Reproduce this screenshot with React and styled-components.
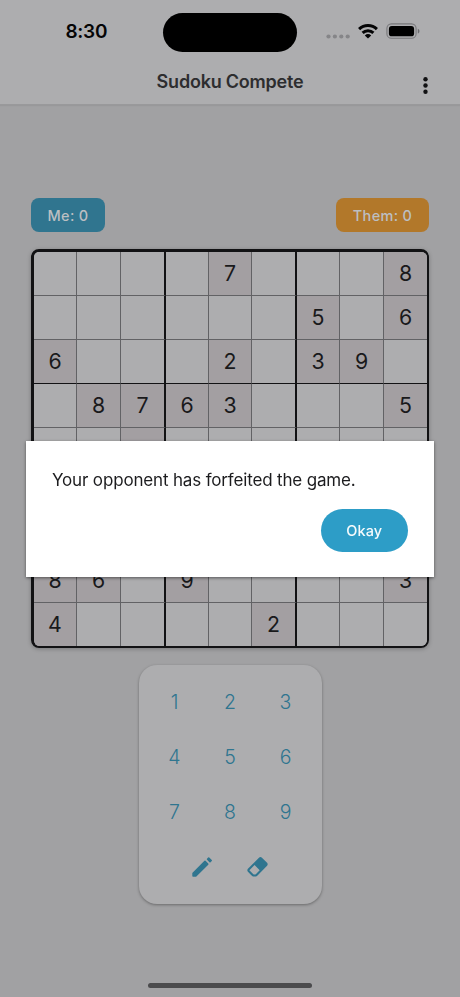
import React from "react";
import styled, { createGlobalStyle } from "styled-components";

const GlobalStyle = createGlobalStyle`
  * { box-sizing: border-box; }
  body {
    margin: 0;
    background: #a1a1a3;
    font-family: Inter, "Liberation Sans", sans-serif;
    color: #19191b;
  }
  button { font: inherit; border: 0; padding: 0; background: none; }
`;

const Screen = styled.div`
  width: 460px;
  height: 997px;
  overflow: hidden;
  display: flex;
  flex-direction: column;
  background: #a1a1a3;
`;

const Header = styled.header`
  height: 105px;
  flex: none;
  background: #adadaf;
  border-bottom: 1px solid #99999b;
  box-shadow: 0 1px 1px rgba(0, 0, 0, 0.05);
`;

const StatusBar = styled.div`
  height: 63px;
  display: grid;
  grid-template-columns: 163px 134px 163px;
`;

const Clock = styled.time`
  padding: 19px 0 0 65.5px;
  font-size: 19px;
  line-height: 26px;
  font-weight: 600;
  letter-spacing: -0.3px;
  color: #050506;
`;

const Island = styled.div`
  height: 39px;
  margin-top: 12.5px;
  border-radius: 20px;
  background: #000;
`;

const StatusIcons = styled.div`
  display: flex;
  padding: 20px 0 0 29px;
`;

const TitleBar = styled.div`
  display: grid;
  grid-template-columns: 60px 1fr 60px;
  height: 41px;
`;

const Title = styled.h1`
  grid-column: 2;
  margin: 6px 0 0;
  font-size: 18px;
  line-height: 26px;
  font-weight: 600;
  letter-spacing: -0.22px;
  text-align: center;
  color: #2d2d2f;
`;

const MenuButton = styled.button`
  display: flex;
  padding: 13px 0 0 22px;
`;

const Scores = styled.div`
  display: flex;
  justify-content: space-between;
  padding: 93px 31px 0;
`;

const Score = styled.div`
  width: ${({ $w }) => $w}px;
  height: 34px;
  border-radius: 8px;
  background: ${({ $bg }) => $bg};
  color: #bcbfc2;
  font-size: 14.5px;
  line-height: 35px;
  font-weight: 450;
  letter-spacing: 0.3px;
  text-align: center;
`;

const Board = styled.div`
  width: 398px;
  flex: none;
  margin: 17px 0 0 31px;
  border: solid #121214;
  border-width: 3px 2px 2px 3px;
  border-radius: 8px;
  overflow: hidden;
  display: grid;
  grid-template-columns: 43px 44px 45px 43px 43px 45px 43px 44px 43px;
  grid-template-rows: 44px 44px 44px 44px 44px 43px 44px 44px 43px;
  box-shadow: 0 1px 4px rgba(0, 0, 0, 0.25);
`;

const Cell = styled.div`
  display: flex;
  align-items: center;
  justify-content: center;
  padding-bottom: 1px;
  font-size: 21.3px;
  line-height: 26px;
  background: ${({ $given }) => ($given ? "#a39fa2" : "#adadaf")};
  border-right: ${({ $right }) => ["0", "1px solid #626265", "2px solid #121214"][$right]};
  border-bottom: ${({ $bottom }) => ["0", "1px solid #626265", "1px solid #121214"][$bottom]};
`;

const Pad = styled.div`
  width: 183px;
  height: 239px;
  flex: none;
  margin: 17px 0 0 138.5px;
  padding: 9px 8px;
  border-radius: 18px;
  background: #adadaf;
  box-shadow: 0 1px 3px rgba(0, 0, 0, 0.35);
`;

const PadRow = styled.div`
  display: flex;
  justify-content: center;
`;

const Key = styled.button`
  width: 55.5px;
  height: 55.3px;
  display: flex;
  align-items: center;
  justify-content: center;
  font-size: 19.5px;
  line-height: 24px;
  font-weight: 350;
  color: #2f758f;
`;

const IconKey = styled(Key)`
  padding-bottom: 2px;
`;

const HomeIndicator = styled.div`
  width: 164px;
  height: 5px;
  margin: auto auto 9px;
  border-radius: 3px;
  background: #4b4b4d;
`;

const DialogLayer = styled.div`
  position: fixed;
  top: 441px;
  left: 26px;
`;

const Dialog = styled.div`
  width: 408px;
  height: 136px;
  padding: 25px 26px;
  display: flex;
  flex-direction: column;
  background: #fff;
  box-shadow: 0 1px 3px rgba(0, 0, 0, 0.5);
`;

const Message = styled.p`
  margin: 0;
  font-size: 17px;
  line-height: 28px;
  letter-spacing: -0.16px;
  white-space: nowrap;
  color: #1c1c1e;
`;

const OkayButton = styled.button`
  align-self: flex-end;
  width: 87.5px;
  height: 43px;
  margin-top: 15px;
  border-radius: 22px;
  background: #2d9dc7;
  color: #f4fafc;
  font-size: 14.5px;
  font-weight: 500;
  letter-spacing: 0.1px;
`;

const GIVENS = [
  "....7...8",
  "......5.6",
  "6...2.39.",
  ".8763...5",
  "..4......",
  ".........",
  ".........",
  "86.9....3",
  "4....2...",
];

const edge = (i) => (i === 8 ? 0 : i % 3 === 2 ? 2 : 1);

const StatusGlyphs = () => (
  <svg width="110" height="24" viewBox="326 20 110 24">
    <g fill="#858588">
      <circle cx="328.5" cy="36.5" r="2.1" />
      <circle cx="334.9" cy="36.5" r="2.1" />
      <circle cx="341.3" cy="36.5" r="2.1" />
      <circle cx="347.7" cy="36.5" r="2.1" />
    </g>
    <g fill="none" stroke="#050506" strokeWidth="3">
      <path d="M359.1 29.1a12.7 12.7 0 0 1 17.8 0" />
      <path d="M362.6 32.9a7.7 7.7 0 0 1 10.8 0" />
    </g>
    <path d="M364.8 35.5a4.7 4.7 0 0 1 6.4 0L368 38.6z" fill="#050506" />
    <rect x="386.9" y="23.9" width="29.2" height="14.4" rx="4.6" fill="none" stroke="#77777a" strokeWidth="1.1" />
    <rect x="388.9" y="25.9" width="25.2" height="10.4" rx="2.9" fill="#000" />
    <path d="M417.8 28.7c2.2.8 2.2 4 0 4.8z" fill="#6b6b6e" />
  </svg>
);

const MoreIcon = () => (
  <svg width="8" height="20" viewBox="0 0 8 20" fill="#111113">
    <circle cx="3.5" cy="3.2" r="2.2" />
    <circle cx="3.5" cy="9.5" r="2.2" />
    <circle cx="3.5" cy="15.8" r="2.2" />
  </svg>
);

const PencilIcon = () => (
  <svg width="24" height="24" viewBox="0 0 24 24" fill="#2f758f" stroke="#2f758f" strokeWidth="1.6" strokeLinejoin="round">
    <path d="M3.1 18.3L15 6.4l2.7 2.7L5.8 21H3.1z" />
    <path d="M17.6 4.2l1.1-1.2 2.5 2.5-1.2 1.2z" />
  </svg>
);

const EraserIcon = () => (
  <svg width="25" height="25" viewBox="0 0 24 24" fill="#2f758f">
    <path d="M16.24 3.56l4.95 4.94c.78.79.78 2.05 0 2.84L12 20.53a4 4 0 0 1-5.66 0L2.81 17c-.78-.79-.78-2.05 0-2.84l10.6-10.6c.79-.78 2.05-.78 2.83 0M4.22 15.58l3.54 3.53c.78.79 2.04.79 2.83 0l3.53-3.53-4.95-4.95z" />
  </svg>
);

export default function App() {
  return (
    <>
      <GlobalStyle />
      <Screen>
        <Header>
          <StatusBar>
            <Clock>8:30</Clock>
            <Island />
            <StatusIcons>
              <StatusGlyphs />
            </StatusIcons>
          </StatusBar>
          <TitleBar>
            <Title>Sudoku Compete</Title>
            <MenuButton aria-label="Menu">
              <MoreIcon />
            </MenuButton>
          </TitleBar>
        </Header>
        <Scores>
          <Score $w={74} $bg="#30758f">Me: 0</Score>
          <Score $w={93} $bg="#b2782a">Them: 0</Score>
        </Scores>
        <Board>
          {GIVENS.flatMap((row, r) =>
            [...row].map((v, c) => (
              <Cell key={`${r}-${c}`} $given={v !== "."} $right={edge(c)} $bottom={edge(r)}>
                {v === "." ? "" : v}
              </Cell>
            ))
          )}
        </Board>
        <Pad>
          {[[1, 2, 3], [4, 5, 6], [7, 8, 9]].map((row) => (
            <PadRow key={row[0]}>
              {row.map((n) => (
                <Key key={n}>{n}</Key>
              ))}
            </PadRow>
          ))}
          <PadRow>
            <IconKey aria-label="Pencil"><PencilIcon /></IconKey>
            <IconKey aria-label="Eraser"><EraserIcon /></IconKey>
          </PadRow>
        </Pad>
        <HomeIndicator />
      </Screen>
      <DialogLayer>
        <Dialog role="dialog">
          <Message>Your opponent has forfeited the game.</Message>
          <OkayButton>Okay</OkayButton>
        </Dialog>
      </DialogLayer>
    </>
  );
}
